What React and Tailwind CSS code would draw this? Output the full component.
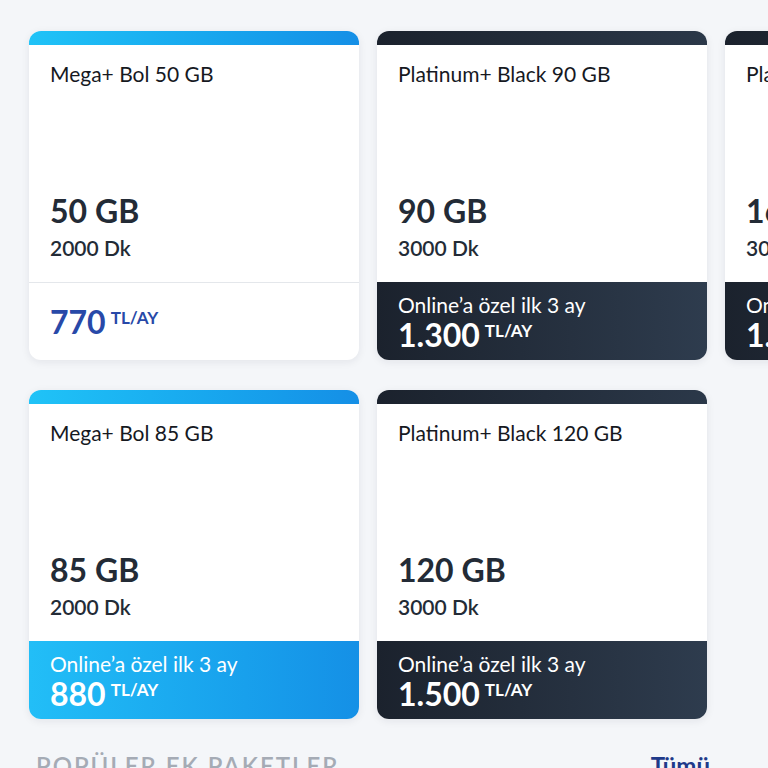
import React from 'react';

const rows = [
  [
    { name: 'Mega+ Bol 50 GB', gb: '50 GB', dk: '2000 Dk', price: '770', tone: 'blue', promo: false },
    { name: 'Platinum+ Black 90 GB', gb: '90 GB', dk: '3000 Dk', price: '1.300', tone: 'dark', promo: true },
    { name: 'Platinum+ Black 160 GB', gb: '160 GB', dk: '3000 Dk', price: '1.800', tone: 'dark', promo: true },
  ],
  [
    { name: 'Mega+ Bol 85 GB', gb: '85 GB', dk: '2000 Dk', price: '880', tone: 'blue', promo: true },
    { name: 'Platinum+ Black 120 GB', gb: '120 GB', dk: '3000 Dk', price: '1.500', tone: 'dark', promo: true },
  ],
];

function PackageCard({ pkg }) {
  const strip =
    pkg.tone === 'blue'
      ? 'bg-gradient-to-r from-[#20c3f7] to-[#158fe6]'
      : 'bg-gradient-to-r from-[#1b222d] to-[#2b3849]';

  const footer =
    pkg.tone === 'blue'
      ? 'bg-gradient-to-r from-[#22bef7] to-[#1590e6]'
      : 'bg-gradient-to-r from-[#1b222d] to-[#2e3c4e]';

  return (
    <div className="w-[330px] shrink-0 rounded-xl overflow-hidden bg-white shadow-[0_2px_8px_rgba(20,30,50,0.08)]">
      <div className={`h-[14px] ${strip}`} />
      <div className="h-[237px] flex flex-col justify-between px-[21px] pt-[15px] pb-[20px]">
        <div className="text-[21px] leading-7 text-[#16191f]">{pkg.name}</div>
        <div>
          <div className="text-[32px] leading-[40px] font-bold text-[#232b36]">{pkg.gb}</div>
          <div className="mt-[3px] text-[21px] leading-7 font-semibold text-[#232b36]">{pkg.dk}</div>
        </div>
      </div>
      {pkg.promo ? (
        <div className={`h-[78px] px-[21px] pt-[11px] text-white ${footer}`}>
          <div className="text-[21px] leading-6">Online’a özel ilk 3 ay</div>
          <div className="flex items-start">
            <span className="text-[32px] leading-9 font-bold">{pkg.price}</span>
            <span className="ml-[5px] mt-[5px] text-[17px] leading-none font-bold">TL/AY</span>
          </div>
        </div>
      ) : (
        <div className="h-[78px] px-[21px] border-t border-[#e4e7eb] flex items-center">
          <div className="flex items-start text-[#2849a8]">
            <span className="text-[32px] leading-[40px] font-bold">{pkg.price}</span>
            <span className="ml-[5px] mt-[7px] text-[17px] leading-none font-bold">TL/AY</span>
          </div>
        </div>
      )}
    </div>
  );
}

export default function App() {
  return (
    <div
      className="min-h-screen w-full overflow-hidden bg-[#f4f6f9] pt-[31px]"
      style={{ fontFamily: 'Lato, "Open Sans", sans-serif' }}
    >
      <div className="flex flex-col gap-[30px]">
        {rows.map((row, i) => (
          <div key={i} className="flex gap-[18px] pl-[29px]">
            {row.map((pkg) => (
              <PackageCard key={pkg.name} pkg={pkg} />
            ))}
          </div>
        ))}
      </div>
      <div className="mt-[33px] flex items-center justify-between pl-[36px] pr-[58px]">
        <div className="text-[24px] leading-7 font-semibold tracking-[2px] text-[#a5abb5]">POPÜLER EK PAKETLER</div>
        <div className="text-[24px] leading-7 font-bold text-[#1f3a8a]">Tümü</div>
      </div>
    </div>
  );
}
